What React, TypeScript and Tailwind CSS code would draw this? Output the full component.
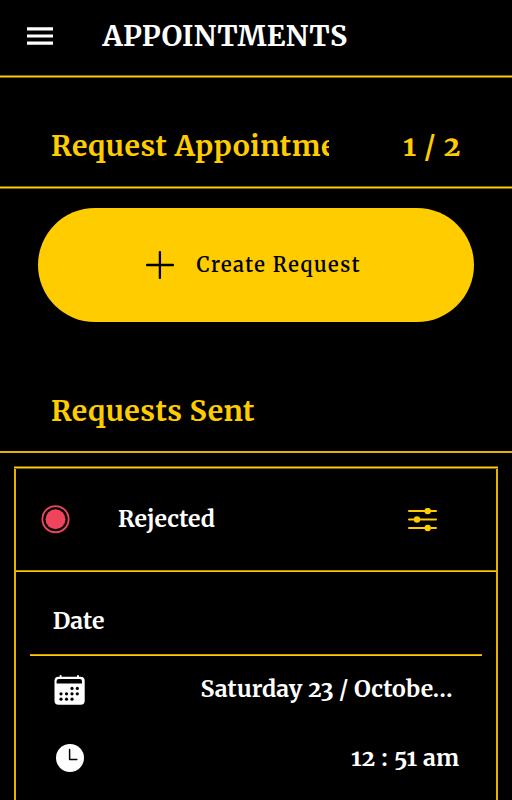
import type { ReactNode } from 'react';

const serif = "font-['Merriweather','DejaVu_Serif_Condensed','DejaVu_Serif',serif]";

function Rule() {
    return <div className="h-[3px] w-full shrink-0 border-y border-[#806600] bg-[#ffcc00]" />;
}

function MenuIcon() {
    return (
        <svg width="26" height="18" viewBox="0 0 26 18" fill="#fff">
            <path d="M0 0.3h26v3.1H0zM0 7.4h26v3.1H0zM0 14.6h26v3.1H0z" />
        </svg>
    );
}

function PlusIcon() {
    return (
        <svg width="28" height="28" viewBox="0 0 28 28" stroke="#000" strokeWidth="2.3" strokeLinecap="round">
            <path d="M13.9 1v26M1 14h26" />
        </svg>
    );
}

function StatusIcon() {
    return (
        <svg width="29" height="29" viewBox="0 0 29 29">
            <circle cx="14.5" cy="14.2" r="13.1" fill="none" stroke="#ef445b" strokeWidth="1.9" />
            <circle cx="14.5" cy="14.2" r="10" fill="#ef445b" />
        </svg>
    );
}

function SlidersIcon() {
    return (
        <svg width="29" height="24" viewBox="0 0 29 24" fill="#ffcc00">
            <path d="M1 3h27M1 11.5h27M1 20h27" stroke="#ffcc00" strokeWidth="2" strokeLinecap="round" />
            <circle cx="19.7" cy="3" r="3.2" />
            <circle cx="9" cy="11.5" r="3.2" />
            <circle cx="19.7" cy="20" r="3.2" />
        </svg>
    );
}

const calendarDots = [
    [18, 13.4], [23.3, 13.4],
    [7, 18.8], [12.5, 18.8], [18, 18.8], [23.3, 18.8],
    [7, 24.2], [12.5, 24.2], [18, 24.2],
];

function CalendarIcon() {
    return (
        <svg width="31" height="30" viewBox="0 0 31 30">
            <path d="M6.6 1v3M24 1v3" stroke="#fff" strokeWidth="2" strokeLinecap="round" />
            <rect x="0.5" y="1.8" width="30.2" height="28" rx="4" fill="#fff" />
            <path d="M2.6 8.6V6.2Q2.6 4 4.8 4H25.8Q28 4 28 6.2V8.6Z" fill="#000" />
            {calendarDots.map(([x, y]) => (
                <circle key={`${x}-${y}`} cx={x} cy={y} r="1.6" fill="#000" />
            ))}
        </svg>
    );
}

function ClockIcon() {
    return (
        <svg width="28" height="28" viewBox="0 0 28 28">
            <circle cx="14" cy="14" r="14" fill="#fff" />
            <path d="M13.6 5.4v10h7.2" fill="none" stroke="#000" strokeWidth="1.5" strokeLinecap="round" strokeLinejoin="round" />
        </svg>
    );
}

function DetailRow({ icon, children }: { icon: ReactNode; children: ReactNode }) {
    return (
        <div className="flex h-[68px] items-center justify-between pl-[38px]">
            <div className="flex w-[31px] justify-center">{icon}</div>
            {children}
        </div>
    );
}

export default function App() {
    return (
        <main className={`${serif} flex h-[800px] w-[512px] flex-col overflow-hidden bg-black font-bold whitespace-nowrap text-white oldstyle-nums`}>
            {/* Top bar */}
            <header className="flex h-[75px] shrink-0 items-center pb-[3px] pl-[27px]">
                <button aria-label="Menu"><MenuIcon /></button>
                <h1 className="ml-[49.5px] text-[28.5px] tracking-[0.27px]">APPOINTMENTS</h1>
            </header>
            <Rule />

            <section className="flex h-[108px] shrink-0 items-center justify-between pt-[28px] pr-[51px] pl-[51px] text-[28.5px] text-[#ffcc00]">
                <h2 className="w-[278px] overflow-hidden tracking-[0.48px]">Request Appointments</h2>
                <span className="tracking-[0.6px]">1 / 2</span>
            </section>
            <Rule />

            <button className="mx-[38px] mt-[19px] flex h-[114px] shrink-0 items-center rounded-full bg-[#ffcc00] pl-[108px] text-black">
                <PlusIcon />
                <span className="ml-[22.5px] pb-[1px] text-[20px] font-semibold tracking-[1.5px]">Create Request</span>
            </button>

            {/* Sent requests */}
            <h2 className="mt-[66px] flex h-[63px] shrink-0 items-start pl-[51px] text-[28.5px] leading-[46px] tracking-[0.45px] text-[#ffcc00]">
                Requests Sent
            </h2>
            <div className="h-[2px] shrink-0 bg-[#e2b400]" />

            <article className="mx-[14px] mt-[13px] flex h-[340px] shrink-0 flex-col">
                <Rule />
                <div className="flex grow flex-col border-x-2 border-[#e2b400]">
                    <div className="flex h-[101px] shrink-0 items-center pr-[59px] pl-[25px]">
                        <StatusIcon />
                        <span className="mr-auto ml-[48px] text-[23px] tracking-[0.08px]">Rejected</span>
                        <button aria-label="Filter"><SlidersIcon /></button>
                    </div>
                    <div className="h-[2px] shrink-0 border-t border-[#b89200] bg-[#ffcc00]" />
                    <h3 className="flex h-[82px] shrink-0 items-center pt-[16px] pl-[36.7px] text-[23px] tracking-[0.1px]">Date</h3>
                    <div className="mx-[14px] h-[2px] shrink-0 border-t border-[#c89f00] bg-[#ffcc00]" />
                    <DetailRow icon={<CalendarIcon />}>
                        <span className="mr-[40px] w-[255.5px] pb-[1px] text-[23px] tracking-[0.1px]">Saturday 23 / Octobe…</span>
                    </DetailRow>
                    <DetailRow icon={<ClockIcon />}>
                        <span className="mr-[36.5px] text-[23px] tracking-[0.25px]">12 : 51 am</span>
                    </DetailRow>
                </div>
            </article>
        </main>
    );
}
